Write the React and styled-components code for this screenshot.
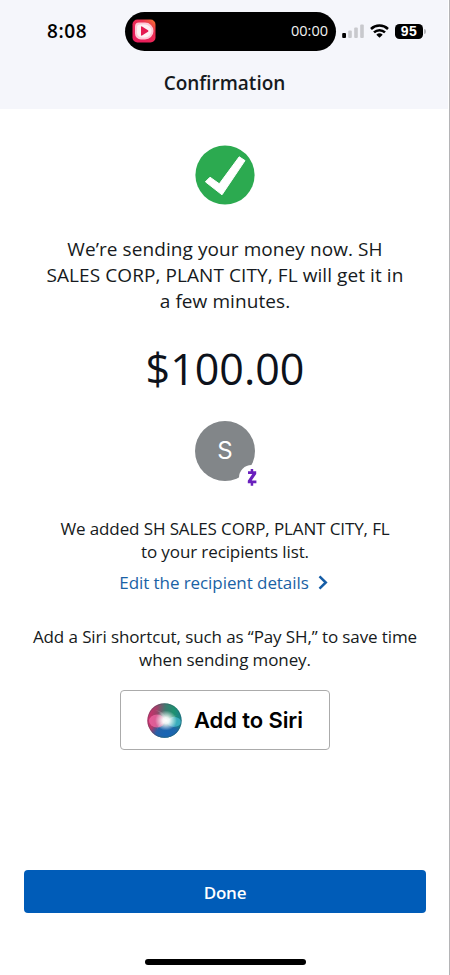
import React from "react";
import styled, { createGlobalStyle } from "styled-components";

const GlobalStyle = createGlobalStyle`
    * {
        box-sizing: border-box;
    }

    body {
        margin: 0;
        background: #ffffff;
        font-family: "Open Sans", "Noto Sans", sans-serif;
        color: #161a20;
    }
`;

const Screen = styled.div`
    width: 450px;
    height: 975px;
    display: flex;
    flex-direction: column;
    overflow: hidden;
    border-right: 1px solid #b4b4b6;
`;

const Header = styled.header`
    height: 109px;
    flex-shrink: 0;
    margin-right: 1px;
    background: #f5f6fb;
`;

const StatusBar = styled.div`
    display: flex;
    align-items: center;
    height: 62px;
    padding-left: 47px;
`;

const Clock = styled.span`
    width: 78px;
    font: 600 19px/24px "Open Sans", sans-serif;
    letter-spacing: 0.6px;
    color: #000000;
`;

const Island = styled.div`
    display: flex;
    align-items: center;
    justify-content: space-between;
    width: 211px;
    height: 39px;
    padding: 0 8px 0 7px;
    border-radius: 20px;
    background: #000000;
`;

const RecordingTime = styled.span`
    font-size: 14.5px;
    line-height: 20px;
    color: #f2f2f2;
`;

const Indicators = styled.div`
    display: flex;
    align-items: center;
    margin-left: 6px;
`;

const Battery = styled.div`
    display: flex;
    align-items: center;
    margin-left: 6px;
`;

const BatteryLevel = styled.span`
    width: 28px;
    height: 15px;
    border-radius: 4.5px;
    background: #000000;
    color: #ffffff;
    font: 700 14px/15px "Liberation Sans", sans-serif;
    letter-spacing: 0.4px;
    text-align: center;
`;

const BatteryTip = styled.span`
    width: 2px;
    height: 5px;
    margin-left: 1px;
    border-radius: 0 2px 2px 0;
    background: #b5b6ba;
`;

const Title = styled.h1`
    margin: 8px 0 0;
    padding-left: 1px;
    font-size: 19px;
    font-weight: 600;
    line-height: 26px;
    text-align: center;
`;

const Content = styled.main`
    flex: 1;
    display: flex;
    flex-direction: column;
    align-items: center;
    padding: 36px 0 0 1px;
`;

const Message = styled.p`
    margin: ${props => props.$top}px 0 0;
    font-size: ${props => props.$size}px;
    line-height: ${props => props.$line}px;
    letter-spacing: ${props => props.$spacing || 0}px;
    text-align: center;
    white-space: nowrap;
`;

const Amount = styled.div`
    margin-top: 25px;
    font-size: 43px;
    line-height: 60px;
    color: #0d121b;
`;

const Avatar = styled.div`
    position: relative;
    display: flex;
    align-items: center;
    justify-content: center;
    width: 60px;
    height: 60px;
    margin-top: 22px;
    border-radius: 50%;
    background: #828689;
    color: #ffffff;
    font: 400 24px/30px Inter, sans-serif;
`;

const ZelleBadge = styled.span`
    position: absolute;
    left: 44px;
    top: 44px;
    display: flex;
    align-items: center;
    justify-content: center;
    width: 25px;
    height: 25px;
    border-radius: 50%;
    background: #ffffff;
`;

const EditLink = styled.a`
    display: flex;
    align-items: center;
    gap: 9px;
    margin-top: 8px;
    padding-right: 3px;
    font-size: 17px;
    line-height: 23px;
    letter-spacing: -0.07px;
    color: #1a62a5;
`;

const SiriButton = styled.button`
    display: flex;
    align-items: center;
    gap: 12px;
    width: 210px;
    height: 60px;
    margin-top: 19px;
    padding: 0 0 0 26px;
    border: 1px solid #ababab;
    border-radius: 4px;
    background: #ffffff;
    color: #000000;
    font: 600 22px/28px Inter, sans-serif;
    letter-spacing: -0.1px;
    white-space: nowrap;
`;

const Footer = styled.footer`
    display: flex;
    flex-direction: column;
    align-items: center;
    height: 105px;
    padding-left: 1px;
`;

const DoneButton = styled.button`
    width: 402px;
    height: 43px;
    padding: 1px 0 0;
    border: 0;
    border-radius: 4px;
    background: #005cb8;
    color: #ffffff;
    font: 600 17px/23px "Open Sans", sans-serif;
    letter-spacing: -0.2px;
`;

const HomeIndicator = styled.div`
    width: 161px;
    height: 6px;
    margin-top: 46px;
    border-radius: 3px;
    background: #000000;
`;

const RecorderIcon = () => (
    <svg width="24" height="24" viewBox="0 0 24 24">
        <defs>
            <linearGradient id="recorder" x1="1" y1="0" x2="0.3" y2="0.8">
                <stop offset="0" stopColor="#f47a2c" />
                <stop offset="0.4" stopColor="#ec3152" />
                <stop offset="1" stopColor="#e91e5b" />
            </linearGradient>
        </defs>
        <rect x="0.5" y="0.5" width="23" height="23" rx="5" fill="url(#recorder)" />
        <path d="M7 3.5H13a8 8 0 0 1 0 17H9a6 6 0 0 1-6-6V7.5a4 4 0 0 1 4-4Z" fill="#ffc9d6" />
        <path d="M8 5.5h5a6.3 6.3 0 0 1 0 13H10a5 5 0 0 1-5-5V8.5a3 3 0 0 1 3-3Z" fill="#fff1f3" />
        <path d="M9 8v8q0 1 1 .5l6-3.8q1-.7 0-1.4l-6-3.8Q9 7 9 8Z" fill="#e51b50" />
    </svg>
);

const SignalIcon = () => (
    <svg width="22" height="14" viewBox="0 0 22 14">
        <rect x="0.2" y="9" width="3.8" height="5" rx="1" fill="#000" />
        <rect x="6.2" y="6.5" width="3.6" height="7.5" rx="1" fill="#c8c9cd" />
        <rect x="12.2" y="3.5" width="3.6" height="10.5" rx="1" fill="#c8c9cd" />
        <rect x="18.2" y="0.5" width="3.6" height="13.5" rx="1" fill="#c8c9cd" />
    </svg>
);

const WifiIcon = styled(({ className }) => (
    <svg className={className} width="19" height="14" viewBox="0 0 19 14">
        <g fill="none" stroke="#000" strokeWidth="2.5">
            <path d="M1 5a12.3 12.3 0 0 1 17 0" />
            <path d="M4 8.4a8 8 0 0 1 11 0" />
        </g>
        <path d="M6.3 10.7a4.8 4.8 0 0 1 6.4 0L9.5 13.8Z" fill="#000" />
    </svg>
))`
    margin-left: 6px;
`;

const SuccessIcon = () => (
    <svg width="60" height="60" viewBox="0 0 60 60">
        <circle cx="30" cy="30" r="29.6" fill="#2caa50" />
        <path
            d="M10.4 36.8 15 32.2 24.3 38.8 44.2 11.8 50 15.6 27 49.8Z"
            fill="#fff"
            stroke="#fff"
            strokeWidth="1"
            strokeLinejoin="round"
        />
    </svg>
);

const ZelleIcon = () => (
    <svg width="12" height="19" viewBox="0 0 12 19">
        <path
            d="M4.7 1H7.2V3.3H10.2V6L5.7 12.5H10.4V15.3H7.2V17.8H4.7V15.3H1.8V12.7L6.3 6.1H2V3.3H4.7Z"
            fill="#6a20bd"
        />
    </svg>
);

const ChevronIcon = () => (
    <svg width="10" height="15" viewBox="0 0 10 15">
        <path d="M1.5 1.3 7.8 7.5 1.5 13.7" fill="none" stroke="#165da6" strokeWidth="2.5" />
    </svg>
);

const SiriIcon = () => (
    <svg width="35" height="35" viewBox="0 0 35 35">
        <defs>
            <linearGradient id="orb" x1="0" y1="0.4" x2="1" y2="0.5">
                <stop offset="0" stopColor="#d62d6d" />
                <stop offset="0.25" stopColor="#a14069" />
                <stop offset="0.5" stopColor="#3e7b70" />
                <stop offset="0.75" stopColor="#1d9170" />
                <stop offset="1" stopColor="#187d91" />
            </linearGradient>
            <radialGradient id="glow">
                <stop offset="0" stopColor="#fff" />
                <stop offset="0.3" stopColor="#fff" stopOpacity="0.9" />
                <stop offset="1" stopColor="#fff" stopOpacity="0" />
            </radialGradient>
            <radialGradient id="deep">
                <stop offset="0" stopColor="#1764b5" />
                <stop offset="0.6" stopColor="#1e62b0" stopOpacity="0.9" />
                <stop offset="1" stopColor="#2456a0" stopOpacity="0" />
            </radialGradient>
            <clipPath id="round">
                <circle cx="17.5" cy="17.5" r="17.2" />
            </clipPath>
        </defs>
        <g clipPath="url(#round)">
            <rect width="35" height="35" fill="url(#orb)" />
            <ellipse cx="20" cy="31" rx="18" ry="12" fill="url(#deep)" />
            <ellipse cx="10" cy="18" rx="8" ry="6.5" fill="#f268a5" fillOpacity="0.75" />
            <ellipse cx="27" cy="19" rx="7" ry="5" fill="#4ac2dc" fillOpacity="0.65" />
            <path d="M8 7Q18 8 20 18Q26 13 30 12Q23 17 20 19Q13 20 10 27Q11 21 17 18Q16 10 8 7Z" fill="#fff" fillOpacity="0.15" />
            <ellipse cx="19" cy="17.5" rx="11" ry="10" fill="url(#glow)" />
            <circle cx="17.5" cy="17.5" r="16.8" fill="none" stroke="#315b62" strokeOpacity="0.45" />
        </g>
    </svg>
);

const App = () => {
    return (
        <Screen>
            <GlobalStyle />
            <Header>
                <StatusBar>
                    <Clock>8:08</Clock>
                    <Island>
                        <RecorderIcon />
                        <RecordingTime>00:00</RecordingTime>
                    </Island>
                    <Indicators>
                        <SignalIcon />
                        <WifiIcon />
                        <Battery>
                            <BatteryLevel>95</BatteryLevel>
                            <BatteryTip />
                        </Battery>
                    </Indicators>
                </StatusBar>
                <Title>Confirmation</Title>
            </Header>
            <Content>
                <SuccessIcon />
                <Message $top={31} $size={19} $line={26} $spacing={0.08}>
                    We’re sending your money now. SH<br />
                    SALES CORP, PLANT CITY, FL will get it in<br />
                    a few minutes.
                </Message>
                <Amount>$100.00</Amount>
                <Avatar>
                    S
                    <ZelleBadge>
                        <ZelleIcon />
                    </ZelleBadge>
                </Avatar>
                <Message $top={36} $size={17} $line={23} $spacing={-0.11}>
                    We added SH SALES CORP, PLANT CITY, FL<br />
                    to your recipients list.
                </Message>
                <EditLink>
                    Edit the recipient details
                    <ChevronIcon />
                </EditLink>
                <Message $top={31} $size={17} $line={23} $spacing={-0.1}>
                    Add a Siri shortcut, such as “Pay SH,” to save time<br />
                    when sending money.
                </Message>
                <SiriButton>
                    <SiriIcon />
                    Add to Siri
                </SiriButton>
            </Content>
            <Footer>
                <DoneButton>Done</DoneButton>
                <HomeIndicator />
            </Footer>
        </Screen>
    );
};

export default App;
